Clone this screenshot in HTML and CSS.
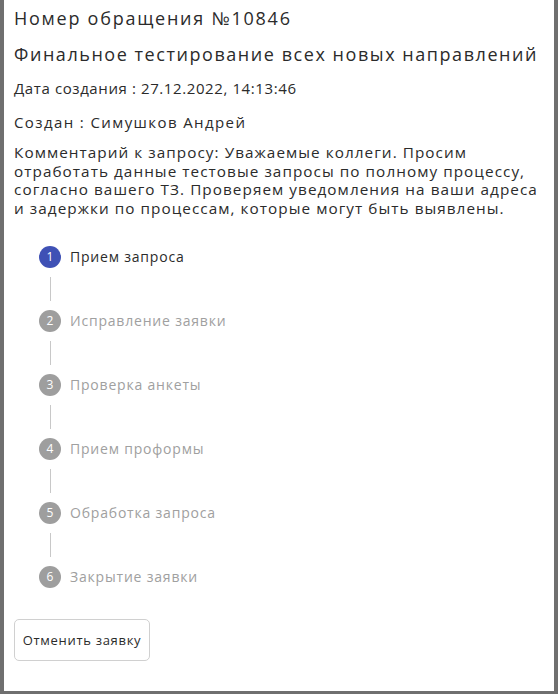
FILE: index.html
```html
<!DOCTYPE html>
<html lang="ru">
<head>
<meta charset="utf-8">
<link rel="stylesheet" href="styles.css">
</head>
<body>
<div class="modal">
  <div class="title">Номер обращения №10846</div>
  <div class="subtitle">Финальное тестирование всех новых направлений</div>
  <div class="meta date">Дата создания : 27.12.2022, 14:13:46</div>
  <div class="meta author">Создан : Симушков Андрей</div>
  <div class="comment">Комментарий к запросу: Уважаемые коллеги. Просим<br>отработать данные тестовые запросы по полному процессу,<br>согласно вашего ТЗ. Проверяем уведомления на ваши адреса<br>и задержки по процессам, которые могут быть выявлены.</div>
  <div class="stepper">
    <div class="step active"><span class="num">1</span><span class="label">Прием запроса</span></div>
    <div class="line"></div>
    <div class="step"><span class="num">2</span><span class="label">Исправление заявки</span></div>
    <div class="line"></div>
    <div class="step"><span class="num">3</span><span class="label">Проверка анкеты</span></div>
    <div class="line"></div>
    <div class="step"><span class="num">4</span><span class="label">Прием проформы</span></div>
    <div class="line"></div>
    <div class="step"><span class="num">5</span><span class="label">Обработка запроса</span></div>
    <div class="line"></div>
    <div class="step"><span class="num">6</span><span class="label">Закрытие заявки</span></div>
  </div>
  <div class="actions"><button class="btn">Отменить заявку</button></div>
</div>
</body>
</html>
```
FILE: styles.css
```css
html, body { margin: 0; padding: 0; }
body {
  background: #6f6f6f;
  width: 558px;
  height: 694px;
  overflow: hidden;
  font-family: "Open Sans", "Noto Sans", sans-serif;
  color: #2b2b2b;
}
.modal {
  margin-left: 4px;
  width: 550px;
  height: 691px;
  background: #fff;
  box-sizing: border-box;
  padding: 6px 10px 0 10px;
}
.title {
  font-size: 18px;
  line-height: 24px;
  letter-spacing: 1.75px;
}
.subtitle {
  font-size: 18px;
  line-height: 24px;
  margin-top: 12px;
  letter-spacing: 1.55px;
  white-space: nowrap;
}
.meta {
  font-size: 15px;
  line-height: 20px;
  margin-top: 12px;
}
.date { letter-spacing: 0.6px; }
.author { margin-top: 14px; letter-spacing: 1.4px; }
.comment {
  font-size: 15.3px;
  line-height: 18.7px;
  margin-top: 11px;
  letter-spacing: 1.05px;
  white-space: nowrap;
}
.stepper {
  margin-top: 27px;
  padding-left: 25px;
  display: flex;
  flex-direction: column;
}
.step {
  display: flex;
  align-items: center;
  height: 24px;
  gap: 9px;
}
.num {
  width: 22px;
  height: 22px;
  border-radius: 50%;
  background: #9e9e9e;
  color: #fff;
  font-size: 12px;
  display: flex;
  align-items: center;
  justify-content: center;
  flex: none;
}
.label {
  font-size: 14px;
  color: #a0a0a0;
  letter-spacing: 0.8px;
}
.active .num { background: #3f51b5; }
.active .label { color: #2b2b2b; }
.line {
  width: 1px;
  height: 24px;
  background: #c8c8c8;
  margin: 8px 0 8px 10.5px;
}
.actions { margin-top: 30px; }
.btn {
  font-family: inherit;
  font-size: 13px;
  letter-spacing: 0.7px;
  color: #2b2b2b;
  background: #fff;
  border: 1px solid #d0d0d0;
  border-radius: 5px;
  width: 136px;
  height: 42px;
  padding: 0;
}
```
